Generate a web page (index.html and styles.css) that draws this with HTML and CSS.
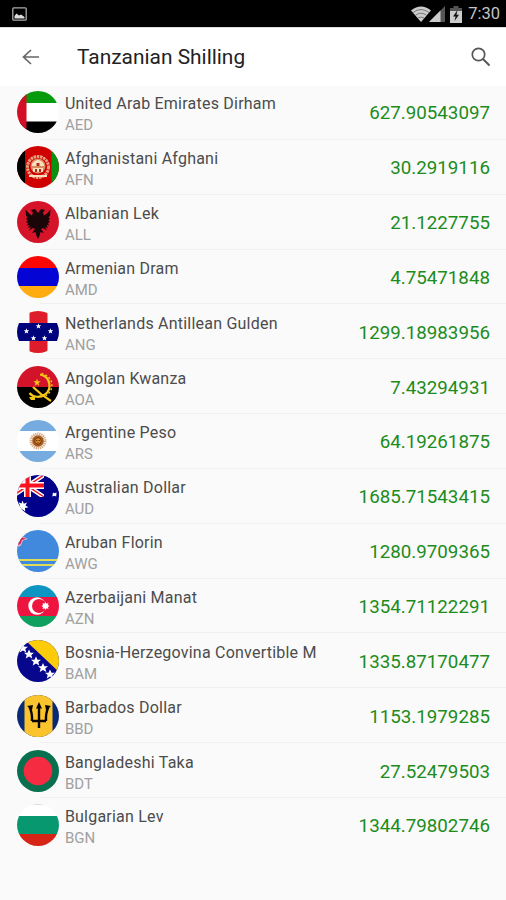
FILE: index.html
```
<!DOCTYPE html>
<html lang="en">
<head>
	<meta charset="UTF-8">
	<title>Tanzanian Shilling</title>
	<link rel="stylesheet" href="styles.css">
</head>
<body>
	<div class="status-bar">
		<svg class="picture" viewBox="0 0 15 14"><rect x=".8" y=".8" width="13.4" height="12.4" rx="1" fill="none" stroke="#aaa" stroke-width="1.3"/><path d="M2.5 11.500V9l2-2.500 2.500 2 2-1 3.500 2.500v1.500z" fill="#ddd"/></svg>
		<div class="status-icons">
			<svg class="wifi" viewBox="0 0 20 16"><path d="M0 4.500Q10-3.500 20 4.500L10 16z" fill="#ccc"/><path d="M2 6.500q8-6 16 0M4.500 9.200q5.500-4 11 0M7 12q3-2 6 0" fill="none" stroke="#555" stroke-width=".7"/></svg>
			<svg class="signal" viewBox="0 0 16 16"><path d="M16 0v16H0z" fill="#555"/><path d="M11.500 4.500V16H0z" fill="#ccc"/></svg>
			<svg class="battery" viewBox="0 0 12 17"><path d="M3.500 0h5v2H12v4H0V2h3.500z" fill="#555"/><path d="M0 5h12v12H0z" fill="#ccc"/><path d="M7.500 4L3 10.500h2.600L4.500 15 9 8.800H6.500z" fill="#111"/></svg>
			<span class="time">7:30</span>
		</div>
	</div>

	<div class="toolbar">
		<svg class="back" viewBox="0 0 18 16"><path d="M17 8H1.500M9 1L1.500 8 9 15" fill="none" stroke="#666" stroke-width="1.700"/></svg>
		<h1 class="title">Tanzanian Shilling</h1>
		<svg class="search" viewBox="0 0 20 20"><circle cx="7.500" cy="7.500" r="6.200" fill="none" stroke="#555" stroke-width="1.700"/><path d="M12 12l6.500 6.500" stroke="#555" stroke-width="2"/></svg>
	</div>

	<ul class="list">
		<li class="row">
			<svg class="flag" viewBox="0 0 42 42"><path fill="#fff" d="M0 0h42v42H0z"/><path fill="#069b0c" d="M0 0h42v12H0z"/><path d="M0 30.500h42V42H0z"/><path fill="#d20f24" d="M0 0h9.500v42H0z"/></svg>
			<div class="currency"><p class="name">United Arab Emirates Dirham</p><p class="code">AED</p></div>
			<span class="rate">627.90543097</span>
		</li>
		<li class="row">
			<svg class="flag" viewBox="0 0 42 42"><path fill="#d00000" d="M0 0h42v42H0z"/><path d="M0 0h8v42H0z"/><path fill="#079212" d="M34.500 0H42v42h-7.500z"/><circle cx="21" cy="21" r="10.500" fill="none" stroke="#e8a080" stroke-width="3" stroke-dasharray="2.500 .7"/><circle cx="21" cy="20" r="7.500" fill="#d98a60"/><path fill="#f8dfc0" d="M15 18q6-8 12 0v2H15zM16 22h10v4H16zM12 29h18v2H12z"/><path fill="#b32a16" d="M19.500 17h3v3h-3zM18 23h2v3h-2zM22 23h2v3h-2z"/></svg>
			<div class="currency"><p class="name">Afghanistani Afghani</p><p class="code">AFN</p></div>
			<span class="rate">30.2919116</span>
		</li>
		<li class="row">
			<svg class="flag" viewBox="0 0 42 42"><path fill="#d5142a" d="M0 0h42v42H0z"/><path fill="#1a0508" d="M21 12l-3-4-4 1 2 2.500-1 3-3-2-3.500-4 .5 6 1.500 2-1.500 1 1.500 2-1.500 1.500 2 1-1 2.500 2.500-.5-1.500 3 3-1-2 3.500 4-2.500 2 1-3 4 3.500-1 1 4 1.500 3 1.500-3 1-4 3.500 1-3-4 2-1 4 2.500-2-3.500 3 1-1.500-3 2.500.5-1-2.500 2-1-1.500-1.500 1.500-2-1.500-1 1.500-2 .5-6-3.500 4-3 2-1-3 2-2.500-4-1z"/></svg>
			<div class="currency"><p class="name">Albanian Lek</p><p class="code">ALL</p></div>
			<span class="rate">21.1227755</span>
		</li>
		<li class="row">
			<svg class="flag" viewBox="0 0 42 42"><path fill="#fb0505" d="M0 0h42v12H0z"/><path fill="#0404d4" d="M0 12h42v18H0z"/><path fill="#ffac10" d="M0 30h42v12H0z"/></svg>
			<div class="currency"><p class="name">Armenian Dram</p><p class="code">AMD</p></div>
			<span class="rate">4.75471848</span>
		</li>
		<li class="row">
			<svg class="flag" viewBox="0 0 42 42"><path fill="#df1c29" d="M12.500 0h18v42h-18z"/><rect y="12" width="42" height="18" rx="2" fill="#00047c"/><g fill="#fff"><path id="star" d="M9.500 17.200l.7 2 2.100.1-1.600 1.300.6 2-1.800-1.100-1.800 1.100.6-2-1.600-1.300 2.100-.1z"/><use href="#star" x="12" y="-5"/><use href="#star" x="24"/><use href="#star" x="7" y="7"/><use href="#star" x="18" y="7"/></g></svg>
			<div class="currency"><p class="name">Netherlands Antillean Gulden</p><p class="code">ANG</p></div>
			<span class="rate">1299.18983956</span>
		</li>
		<li class="row">
			<svg class="flag" viewBox="0 0 42 42"><path fill="#d31329" d="M0 0h42v21H0z"/><path d="M0 21h42v21H0z"/><path d="M23 8.500c11 2 12 15 5 20-5 3.500-12 3-15.500-1.500" fill="none" stroke="#f3c713" stroke-width="2.200"/><path d="M24.500 7.500c13 3 13 17 4.500 22" fill="none" stroke="#f3c713" stroke-width="1.500" stroke-dasharray="2 2"/><path d="M16 21q8 8 18 14" fill="none" stroke="#f3c713" stroke-width="2.200"/><path fill="#f3c713" d="M20 12.500l.9 2.700 2.800.1-2.200 1.700.7 2.700-2.200-1.500-2.300 1.500.8-2.700-2.200-1.700 2.800-.1zM12 31l6 0v3h-4z"/></svg>
			<div class="currency"><p class="name">Angolan Kwanza</p><p class="code">AOA</p></div>
			<span class="rate">7.43294931</span>
		</li>
		<li class="row">
			<svg class="flag" viewBox="0 0 42 42"><path fill="#fff" d="M0 0h42v42H0z"/><path fill="#76abdf" d="M0 0h42v11H0zM0 31h42v11H0z"/><circle cx="21" cy="21" r="7" fill="none" stroke="#d3a880" stroke-width="3" stroke-dasharray="1.200 .8"/><circle cx="21" cy="21" r="5.800" fill="#a85b20"/><circle cx="21" cy="21" r="3.300" fill="#d58b2a" stroke="#74370f"/><path fill="#74370f" d="M19 20h1.500v1H19zM21.500 20H23v1h-1.500zM20 22.500h2v.8h-2z"/></svg>
			<div class="currency"><p class="name">Argentine Peso</p><p class="code">ARS</p></div>
			<span class="rate">64.19261875</span>
		</li>
		<li class="row">
			<svg class="flag" viewBox="0 0 42 42"><path fill="#00008b" d="M0 0h42v42H0z"/><path d="M-6 0L27 22M27 0L-6 22" stroke="#fff" stroke-width="4.500"/><path d="M-6 0L27 22M27 0L-6 22" stroke="#f01828" stroke-width="1.500"/><path d="M0 10.500h27M10.500 0v22" stroke="#fff" stroke-width="7"/><path d="M0 10.500h27M10.500 0v22" stroke="#fb1020" stroke-width="4"/><path fill="#00008b" d="M27 0h15v22H27zM0 22h27v6H0z"/><path fill="#fff" d="M5.500 25.500l1.300 3.200 3.200-1.200-1.500 3 3 1.800-3.500.7.200 3.400-2.700-2.200-2.700 2.200V33L0 32l3-1.700-1.500-3 3 1.200z"/><path fill="#fff" d="M36 17.500l1.300.8 2.200-.8-.3 4-1.700-.8-2.200.8z"/></svg>
			<div class="currency"><p class="name">Australian Dollar</p><p class="code">AUD</p></div>
			<span class="rate">1685.71543415</span>
		</li>
		<li class="row">
			<svg class="flag" viewBox="0 0 42 42"><path fill="#4189dc" d="M0 0h42v42H0z"/><path fill="#cbb8dc" d="M1 7l4-1 6 3-5 1.500-2 5-4 2z"/><path fill="#e02848" d="M1 8l3-1 5 1.700-4 1.300L3.500 14 1 15z"/><path d="M0 30h42M0 35h42" stroke="#e0dc58" stroke-width="2.200"/></svg>
			<div class="currency"><p class="name">Aruban Florin</p><p class="code">AWG</p></div>
			<span class="rate">1280.9709365</span>
		</li>
		<li class="row">
			<svg class="flag" viewBox="0 0 42 42"><path fill="#0c95c3" d="M0 0h42v12H0z"/><path fill="#ee1440" d="M0 12h42v19H0z"/><path fill="#0fa060" d="M0 31h42v11H0z"/><circle cx="20" cy="21" r="8.700" fill="#fff"/><circle cx="22" cy="21" r="7" fill="#ee1440"/><path fill="#fff" d="M28.500 17l1 1.700 2-.6-.6 2 1.600.9-1.600.9.6 2-2-.6-1 1.700-1-1.700-2 .6.600-2-1.600-.9 1.600-.9-.6-2 2 .6z"/></svg>
			<div class="currency"><p class="name">Azerbaijani Manat</p><p class="code">AZN</p></div>
			<span class="rate">1354.71122291</span>
		</li>
		<li class="row">
			<svg class="flag" viewBox="0 0 42 42"><path fill="#07078e" d="M0 0h42v42H0z"/><path fill="#fccb0a" d="M8 0h34v32z"/><g fill="#fff"><path id="bigstar" d="M12 9.500l1.500 3.200 3.500.1-2.700 2.200 1 3.500-3.300-2-3.300 2 1-3.500L7 12.800l3.500-.1z"/><use href="#bigstar" x="7" y="7"/><use href="#bigstar" x="14" y="13.500"/><use href="#bigstar" x="21" y="20"/><use href="#bigstar" x="-6" y="-6"/></g></svg>
			<div class="currency"><p class="name">Bosnia-Herzegovina Convertible M</p><p class="code">BAM</p></div>
			<span class="rate">1335.87170477</span>
		</li>
		<li class="row">
			<svg class="flag" viewBox="0 0 42 42"><path fill="#092a75" d="M0 0h42v42H0z"/><path fill="#fbc32c" d="M7.500 0h28v42h-28z"/><path d="M22 12v21M15 26h14M12.500 12q3 6 2.500 14M31.500 12q-3 6-2.500 14" fill="none" stroke="#080500" stroke-width="2.400"/><path fill="#080500" d="M22 7l-3 6.500h6zM10 11l6-1-1 5zM34 11l-6-1 1 5z"/></svg>
			<div class="currency"><p class="name">Barbados Dollar</p><p class="code">BBD</p></div>
			<span class="rate">1153.1979285</span>
		</li>
		<li class="row">
			<svg class="flag" viewBox="0 0 42 42"><path fill="#08704f" d="M0 0h42v42H0z"/><circle cx="21" cy="21" r="14.300" fill="#f52b42"/></svg>
			<div class="currency"><p class="name">Bangladeshi Taka</p><p class="code">BDT</p></div>
			<span class="rate">27.52479503</span>
		</li>
		<li class="row">
			<svg class="flag" viewBox="0 0 42 42"><path fill="#fff" d="M0 0h42v42H0z"/><path fill="#ccc" d="M0 0h42v.8H0z"/><path fill="#08986f" d="M0 12h42v18H0z"/><path fill="#d62517" d="M0 30h42v12H0z"/></svg>
			<div class="currency"><p class="name">Bulgarian Lev</p><p class="code">BGN</p></div>
			<span class="rate">1344.79802746</span>
		</li>
	</ul>
</body>
</html>
```

FILE: styles.css
```
body{
	margin:0;
	height:900px;
	overflow:hidden;
	background-color:#fafafa;
	font-family:Roboto, "Liberation Sans", sans-serif;
}
p,h1,ul{
	margin:0;
	padding:0;
}
svg{
	display:block;
	flex:none;
}
.status-bar{
	display:flex;
	justify-content:space-between;
	align-items:center;
	box-sizing:border-box;
	height:27px;
	padding:1px 6px 0 12px;
	background-color:#000;
}
.picture{
	width:15px;
	height:14px;
}
.status-icons{
	display:flex;
	align-items:center;
}
.wifi{
	width:20px;
	height:16px;
}
.signal{
	width:16px;
	height:16px;
	margin-left:-2px;
}
.battery{
	width:12px;
	height:17px;
	margin:0 6px 0 5px;
}
.time{
	font-size:16.500px;
	line-height:26px;
	color:#c4c4c4;
}
.toolbar{
	display:flex;
	align-items:center;
	box-sizing:border-box;
	height:59px;
	padding:0 15px 0 22px;
	border-top:1px solid #ddd;
	background-color:#fff;
}
.back{
	width:18px;
	height:16px;
}
.title{
	flex:1;
	margin-left:37px;
	font-size:20.900px;
	font-weight:400;
	line-height:30px;
	color:#222;
}
.search{
	width:20px;
	height:20px;
}
.list{
	list-style:none;
	margin-top:-1px;
}
.row{
	display:flex;
	align-items:center;
	position:relative;
	height:54.85px;
	padding:0 16px 0 17.400px;
}
/* divider starts under the flag, not at the edge */
.row:not(:last-child)::after{
	content:"";
	position:absolute;
	left:40px;
	right:0;
	bottom:0;
	height:1px;
	background-color:#f0f0f0;
}
.flag{
	width:42px;
	height:42px;
	border-radius:50%;
}
.currency{
	flex:1;
	margin-left:5.500px;
	padding-top:5px;
}
.name{
	font-size:16px;
	line-height:21px;
	letter-spacing:.22px;
	color:#4c4c4c;
	white-space:nowrap;
}
.code{
	font-size:15px;
	line-height:22px;
	color:#a0a0a0;
}
.rate{
	padding-top:2px;
	font-size:18.750px;
	color:#1c8c1c;
}
```
